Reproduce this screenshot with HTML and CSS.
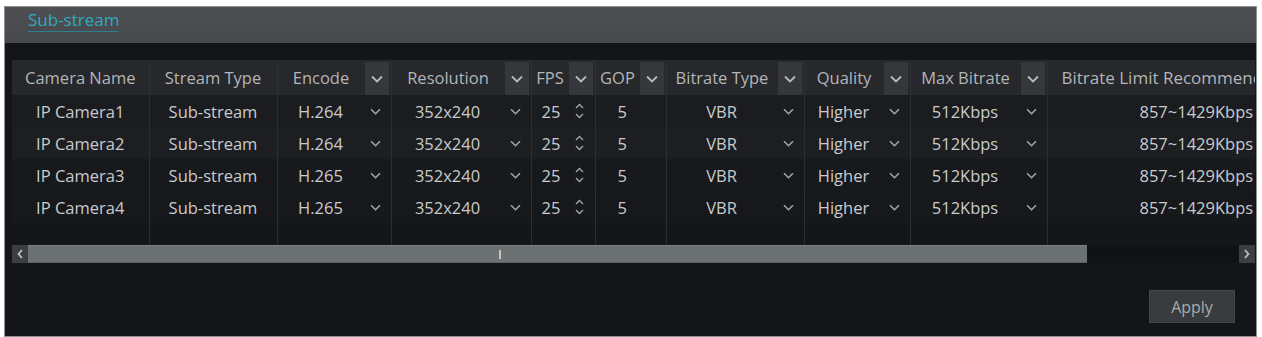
FILE: index.html
```html
<!DOCTYPE html>
<html>
<head>
    <link rel="stylesheet" href="styles.css">
</head>
<body>
    <div class="panel">
        <div class="tabbar">
            <span class="tab">Sub-stream</span>
        </div>

        <div class="content">
            <div class="table-wrap">
                <table class="grid">
                    <colgroup>
                        <col style="width:137px">
                        <col style="width:128px">
                        <col style="width:114px">
                        <col style="width:140px">
                        <col style="width:64px">
                        <col style="width:71px">
                        <col style="width:138px">
                        <col style="width:106px">
                        <col style="width:137px">
                        <col style="width:300px">
                    </colgroup>
                    <thead>
                        <tr>
                            <th><div class="hcell"><span class="hlabel">Camera Name</span></div></th>
                            <th><div class="hcell"><span class="hlabel">Stream Type</span></div></th>
                            <th><div class="hcell"><span class="hlabel">Encode</span><span class="hdrop"><svg width="12" height="8" viewBox="0 0 12 8"><path d="M1 1.5l5 5 5-5" fill="none" stroke="currentColor" stroke-width="1.8"/></svg></span></div></th>
                            <th><div class="hcell"><span class="hlabel">Resolution</span><span class="hdrop"><svg width="12" height="8" viewBox="0 0 12 8"><path d="M1 1.5l5 5 5-5" fill="none" stroke="currentColor" stroke-width="1.8"/></svg></span></div></th>
                            <th><div class="hcell"><span class="hlabel">FPS</span><span class="hdrop"><svg width="12" height="8" viewBox="0 0 12 8"><path d="M1 1.5l5 5 5-5" fill="none" stroke="currentColor" stroke-width="1.8"/></svg></span></div></th>
                            <th><div class="hcell"><span class="hlabel">GOP</span><span class="hdrop"><svg width="12" height="8" viewBox="0 0 12 8"><path d="M1 1.5l5 5 5-5" fill="none" stroke="currentColor" stroke-width="1.8"/></svg></span></div></th>
                            <th><div class="hcell"><span class="hlabel">Bitrate Type</span><span class="hdrop"><svg width="12" height="8" viewBox="0 0 12 8"><path d="M1 1.5l5 5 5-5" fill="none" stroke="currentColor" stroke-width="1.8"/></svg></span></div></th>
                            <th><div class="hcell"><span class="hlabel">Quality</span><span class="hdrop"><svg width="12" height="8" viewBox="0 0 12 8"><path d="M1 1.5l5 5 5-5" fill="none" stroke="currentColor" stroke-width="1.8"/></svg></span></div></th>
                            <th><div class="hcell"><span class="hlabel">Max Bitrate</span><span class="hdrop"><svg width="12" height="8" viewBox="0 0 12 8"><path d="M1 1.5l5 5 5-5" fill="none" stroke="currentColor" stroke-width="1.8"/></svg></span></div></th>
                            <th class="limit-head">Bitrate Limit Recommended</th>
                        </tr>
                    </thead>
                    <tbody>
                        <tr>
                            <td class="center">IP Camera1</td>
                            <td class="center">Sub-stream</td>
                            <td><div class="sel"><span class="val">H.264</span><span class="arrow"><svg width="11" height="7" viewBox="0 0 11 7"><path d="M1 1.2l4.5 4.5L10 1.2" fill="none" stroke="currentColor" stroke-width="1.6"/></svg></span></div></td>
                            <td><div class="sel"><span class="val">352x240</span><span class="arrow"><svg width="11" height="7" viewBox="0 0 11 7"><path d="M1 1.2l4.5 4.5L10 1.2" fill="none" stroke="currentColor" stroke-width="1.6"/></svg></span></div></td>
                            <td><div class="sel"><span class="val">25</span><span class="spin"><svg width="9" height="18" viewBox="0 0 9 18"><path d="M1 6l3.5-3.5L8 6M1 12l3.5 3.5L8 12" fill="none" stroke="currentColor" stroke-width="1.4"/></svg></span></div></td>
                            <td class="gop">5</td>
                            <td><div class="sel"><span class="val">VBR</span><span class="arrow"><svg width="11" height="7" viewBox="0 0 11 7"><path d="M1 1.2l4.5 4.5L10 1.2" fill="none" stroke="currentColor" stroke-width="1.6"/></svg></span></div></td>
                            <td><div class="sel"><span class="val">Higher</span><span class="arrow"><svg width="11" height="7" viewBox="0 0 11 7"><path d="M1 1.2l4.5 4.5L10 1.2" fill="none" stroke="currentColor" stroke-width="1.6"/></svg></span></div></td>
                            <td><div class="sel"><span class="val">512Kbps</span><span class="arrow"><svg width="11" height="7" viewBox="0 0 11 7"><path d="M1 1.2l4.5 4.5L10 1.2" fill="none" stroke="currentColor" stroke-width="1.6"/></svg></span></div></td>
                            <td class="limit">857~1429Kbps</td>
                        </tr>
                        <tr>
                            <td class="center">IP Camera2</td>
                            <td class="center">Sub-stream</td>
                            <td><div class="sel"><span class="val">H.264</span><span class="arrow"><svg width="11" height="7" viewBox="0 0 11 7"><path d="M1 1.2l4.5 4.5L10 1.2" fill="none" stroke="currentColor" stroke-width="1.6"/></svg></span></div></td>
                            <td><div class="sel"><span class="val">352x240</span><span class="arrow"><svg width="11" height="7" viewBox="0 0 11 7"><path d="M1 1.2l4.5 4.5L10 1.2" fill="none" stroke="currentColor" stroke-width="1.6"/></svg></span></div></td>
                            <td><div class="sel"><span class="val">25</span><span class="spin"><svg width="9" height="18" viewBox="0 0 9 18"><path d="M1 6l3.5-3.5L8 6M1 12l3.5 3.5L8 12" fill="none" stroke="currentColor" stroke-width="1.4"/></svg></span></div></td>
                            <td class="gop">5</td>
                            <td><div class="sel"><span class="val">VBR</span><span class="arrow"><svg width="11" height="7" viewBox="0 0 11 7"><path d="M1 1.2l4.5 4.5L10 1.2" fill="none" stroke="currentColor" stroke-width="1.6"/></svg></span></div></td>
                            <td><div class="sel"><span class="val">Higher</span><span class="arrow"><svg width="11" height="7" viewBox="0 0 11 7"><path d="M1 1.2l4.5 4.5L10 1.2" fill="none" stroke="currentColor" stroke-width="1.6"/></svg></span></div></td>
                            <td><div class="sel"><span class="val">512Kbps</span><span class="arrow"><svg width="11" height="7" viewBox="0 0 11 7"><path d="M1 1.2l4.5 4.5L10 1.2" fill="none" stroke="currentColor" stroke-width="1.6"/></svg></span></div></td>
                            <td class="limit">857~1429Kbps</td>
                        </tr>
                        <tr>
                            <td class="center">IP Camera3</td>
                            <td class="center">Sub-stream</td>
                            <td><div class="sel"><span class="val">H.265</span><span class="arrow"><svg width="11" height="7" viewBox="0 0 11 7"><path d="M1 1.2l4.5 4.5L10 1.2" fill="none" stroke="currentColor" stroke-width="1.6"/></svg></span></div></td>
                            <td><div class="sel"><span class="val">352x240</span><span class="arrow"><svg width="11" height="7" viewBox="0 0 11 7"><path d="M1 1.2l4.5 4.5L10 1.2" fill="none" stroke="currentColor" stroke-width="1.6"/></svg></span></div></td>
                            <td><div class="sel"><span class="val">25</span><span class="spin"><svg width="9" height="18" viewBox="0 0 9 18"><path d="M1 6l3.5-3.5L8 6M1 12l3.5 3.5L8 12" fill="none" stroke="currentColor" stroke-width="1.4"/></svg></span></div></td>
                            <td class="gop">5</td>
                            <td><div class="sel"><span class="val">VBR</span><span class="arrow"><svg width="11" height="7" viewBox="0 0 11 7"><path d="M1 1.2l4.5 4.5L10 1.2" fill="none" stroke="currentColor" stroke-width="1.6"/></svg></span></div></td>
                            <td><div class="sel"><span class="val">Higher</span><span class="arrow"><svg width="11" height="7" viewBox="0 0 11 7"><path d="M1 1.2l4.5 4.5L10 1.2" fill="none" stroke="currentColor" stroke-width="1.6"/></svg></span></div></td>
                            <td><div class="sel"><span class="val">512Kbps</span><span class="arrow"><svg width="11" height="7" viewBox="0 0 11 7"><path d="M1 1.2l4.5 4.5L10 1.2" fill="none" stroke="currentColor" stroke-width="1.6"/></svg></span></div></td>
                            <td class="limit">857~1429Kbps</td>
                        </tr>
                        <tr>
                            <td class="center">IP Camera4</td>
                            <td class="center">Sub-stream</td>
                            <td><div class="sel"><span class="val">H.265</span><span class="arrow"><svg width="11" height="7" viewBox="0 0 11 7"><path d="M1 1.2l4.5 4.5L10 1.2" fill="none" stroke="currentColor" stroke-width="1.6"/></svg></span></div></td>
                            <td><div class="sel"><span class="val">352x240</span><span class="arrow"><svg width="11" height="7" viewBox="0 0 11 7"><path d="M1 1.2l4.5 4.5L10 1.2" fill="none" stroke="currentColor" stroke-width="1.6"/></svg></span></div></td>
                            <td><div class="sel"><span class="val">25</span><span class="spin"><svg width="9" height="18" viewBox="0 0 9 18"><path d="M1 6l3.5-3.5L8 6M1 12l3.5 3.5L8 12" fill="none" stroke="currentColor" stroke-width="1.4"/></svg></span></div></td>
                            <td class="gop">5</td>
                            <td><div class="sel"><span class="val">VBR</span><span class="arrow"><svg width="11" height="7" viewBox="0 0 11 7"><path d="M1 1.2l4.5 4.5L10 1.2" fill="none" stroke="currentColor" stroke-width="1.6"/></svg></span></div></td>
                            <td><div class="sel"><span class="val">Higher</span><span class="arrow"><svg width="11" height="7" viewBox="0 0 11 7"><path d="M1 1.2l4.5 4.5L10 1.2" fill="none" stroke="currentColor" stroke-width="1.6"/></svg></span></div></td>
                            <td><div class="sel"><span class="val">512Kbps</span><span class="arrow"><svg width="11" height="7" viewBox="0 0 11 7"><path d="M1 1.2l4.5 4.5L10 1.2" fill="none" stroke="currentColor" stroke-width="1.6"/></svg></span></div></td>
                            <td class="limit">857~1429Kbps</td>
                        </tr>
                        <tr class="filler">
                            <td></td><td></td><td></td><td></td><td></td><td></td><td></td><td></td><td></td><td></td>
                        </tr>
                    </tbody>
                </table>
            </div>

            <div class="scrollbar">
                <span class="sb-btn">
                    <svg width="6" height="10" viewBox="0 0 6 10"><path d="M5 1L1.5 5 5 9" fill="none" stroke="currentColor" stroke-width="1.6"/></svg>
                </span>
                <span class="sb-thumb"><span class="sb-grip"></span></span>
                <span class="sb-track"></span>
                <span class="sb-btn">
                    <svg width="6" height="10" viewBox="0 0 6 10"><path d="M1 1l3.5 4L1 9" fill="none" stroke="currentColor" stroke-width="1.6"/></svg>
                </span>
            </div>
        </div>

        <div class="footer">
            <button class="apply">Apply</button>
        </div>
    </div>
</body>
</html>
```

FILE: styles.css
```css
* {
    box-sizing: border-box;
    margin: 0;
    padding: 0;
}

body {
    background-color: #ffffff;
    font-family: "Open Sans", "DejaVu Sans", sans-serif;
}

.panel {
    width: 1253px;
    height: 331px;
    margin: 6px 0 0 4px;
    border: 1px solid #8f9194;
    background-color: #131518;
    display: flex;
    flex-direction: column;
}

.tabbar {
    height: 36px;
    background: linear-gradient(#4d4f52, #47494c);
    padding-left: 23px;
    display: flex;
    align-items: flex-start;
}

.tab {
    color: #31a9c2;
    font-size: 17px;
    line-height: 23px;
    padding-top: 1px;
    border-bottom: 1px solid #2b7f93;
}

.content {
    padding: 17px 0 0 7px;
}

.table-wrap {
    width: 1243px;
    overflow: hidden;
}

.grid {
    table-layout: fixed;
    width: 1335px;
    border-collapse: collapse;
    border-spacing: 0;
    font-size: 16.5px;
}

.grid th {
    height: 35px;
    background-color: #26282b;
    color: #b3b5b7;
    font-weight: normal;
    border-right: 1px solid #2e3033;
    padding: 0;
    white-space: nowrap;
}

.hcell {
    display: flex;
    align-items: stretch;
    height: 35px;
}

.hlabel {
    flex: 1;
    text-align: center;
    line-height: 35px;
}

.hdrop {
    width: 24px;
    margin: 2px 2px 0 0;
    background-color: #35373a;
    color: #b9bbbd;
    display: flex;
    align-items: center;
    justify-content: center;
}

.grid th.limit-head {
    text-align: left;
    padding-left: 14px;
    border-right: none;
    font-size: 17px;
}

.grid td {
    height: 32px;
    color: #c9cbcd;
    border-right: 1px solid #2c2e32;
    padding: 0;
    white-space: nowrap;
}

.grid tbody tr:nth-child(1) td { background-color: #1a1c1f; }
.grid tbody tr:nth-child(2) td { background-color: #1c1e21; }
.grid tbody tr:nth-child(3) td { background-color: #17191c; }
.grid tbody tr:nth-child(4) td { background-color: #16181b; }

.grid tr.filler td {
    height: 22px;
    background-color: #141619;
}

.center {
    text-align: center;
}

.sel {
    display: flex;
    align-items: center;
}

.val {
    flex: 1;
    text-align: center;
}

.arrow {
    width: 27px;
    color: #a2a4a6;
    display: flex;
    justify-content: center;
    padding-right: 3px;
}

.spin {
    width: 24px;
    color: #a2a4a6;
    display: flex;
    justify-content: center;
    padding-right: 6px;
}

.gop {
    padding-left: 22px !important;
}

.limit {
    padding-left: 92px !important;
}

.scrollbar {
    width: 1243px;
    height: 18px;
    display: flex;
    background-color: #101214;
}

.sb-btn {
    width: 16px;
    background-color: #3c3e41;
    color: #c6c8ca;
    display: flex;
    align-items: center;
    justify-content: center;
}

.sb-thumb {
    width: 1059px;
    background-color: #6c7171;
    border-top: 1px solid #7b8080;
    border-bottom: 1px solid #5d6161;
    display: flex;
    align-items: center;
    padding-left: 471px;
}

.sb-grip {
    width: 2px;
    height: 9px;
    background-color: #c4c6c6;
}

.sb-track {
    flex: 1;
}

.footer {
    display: flex;
    justify-content: flex-end;
    padding: 27px 21px 0 0;
}

.apply {
    width: 86px;
    height: 33px;
    background-color: #393b3e;
    border: 1px solid #434548;
    color: #a9abad;
    font-family: "Open Sans", "DejaVu Sans", sans-serif;
    font-size: 16px;
}
```
